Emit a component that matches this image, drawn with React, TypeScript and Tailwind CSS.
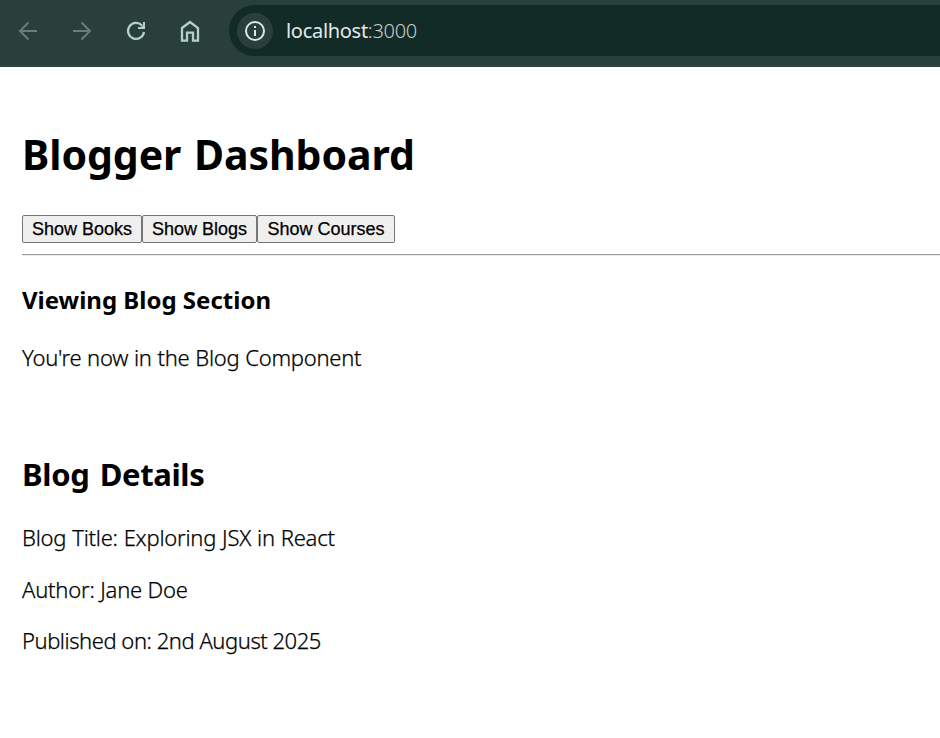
import React from "react";

const line = "block w-max whitespace-nowrap";
const body = "text-[22px] font-light leading-[32px] [-webkit-text-stroke:0.25px_black]";
const button =
  "rounded-[2px] border border-[#767676] bg-[#efefef] font-['Liberation_Sans',sans-serif] text-[18px] leading-[26px] [-webkit-text-stroke:0.25px_black]";

function Toolbar() {
  return (
    <header className="flex h-[67px] items-start border-b-2 border-[#30443f] bg-[#283f3c]">
      <svg width="220" height="62" viewBox="0 0 220 62" fill="none" strokeWidth="2" className="shrink-0">
        <g stroke="#6b7d79">
          <path d="M37 31H20.5M28.5 22.5L20 31L28.5 39.5" />
          <path d="M73 31H89.5M81.5 22.5L90 31L81.5 39.5" />
        </g>
        <g stroke="#b5d0cb" strokeWidth="2.3">
          <path d="M142 25.5A8 8 0 1 0 144 32" />
          <path d="M145 22V29H138V27H141L143 25V22Z" fill="#b5d0cb" stroke="none" />
          <path d="M182 28L190 22L198 28V40.7H193V32.7H187V40.7H182Z" />
        </g>
      </svg>
      <div className="ml-[9px] mt-[5px] flex h-[51px] flex-1 items-center rounded-l-full bg-[#122b27] pl-[8px]">
        <span className="flex h-9 w-9 items-center justify-center rounded-full bg-[#283f3c]">
          <svg width="22" height="22" viewBox="0 0 22 22" fill="none" stroke="#dce7e3" strokeWidth="2">
            <circle cx="11" cy="11" r="9" />
            <path d="M11 10V16M11 6V8" />
          </svg>
        </span>
        <span className="ml-[13px] whitespace-nowrap text-[20px] tracking-[-0.3px] text-[#e3e9e7]">
          localhost<span className="font-light text-[#c4cfcc]">:3000</span>
        </span>
      </div>
    </header>
  );
}

export default function App() {
  return (
    <div className="h-[738px] w-full overflow-hidden bg-white font-['Noto_Sans',sans-serif] text-black">
      <Toolbar />
      <main className="pl-[22px]">
        <h1 className={`${line} mt-[57px] text-[41px] font-bold leading-[60px] tracking-[-0.05px] [word-spacing:2px]`}>Blogger Dashboard</h1>
        <div className="mt-[31px] flex h-7">
          <button className={`${button} w-[120px]`}>Show Books</button>
          <button className={`${button} w-[115px]`}>Show Blogs</button>
          <button className={`${button} w-[138px]`}>Show Courses</button>
        </div>
        <hr className="mt-[11px] h-[2px] border-b border-t border-b-[#eeeeee] border-t-[#9a9a9a]" />
        <h3 className={`${line} mt-[28px] text-[24px] font-bold leading-[32px]`}>Viewing Blog Section</h3>
        <p className={`${line} ${body} mt-[25px] tracking-[-0.27px] [word-spacing:0.4px]`}>You're now in the Blog Component</p>
        <h2 className={`${line} mt-[79px] text-[31px] font-bold leading-[44px] tracking-[-0.35px] [word-spacing:2.5px]`}>Blog Details</h2>
        <p className={`${line} ${body} mt-[25px] tracking-[-0.24px] [word-spacing:0.5px]`}>Blog Title: Exploring JSX in React</p>
        <p className={`${line} ${body} mt-[20px] tracking-[-0.2px]`}>Author: Jane Doe</p>
        <p className={`${line} ${body} mt-[19px] tracking-[-0.46px]`}>Published on: 2nd August 2025</p>
      </main>
    </div>
  );
}
